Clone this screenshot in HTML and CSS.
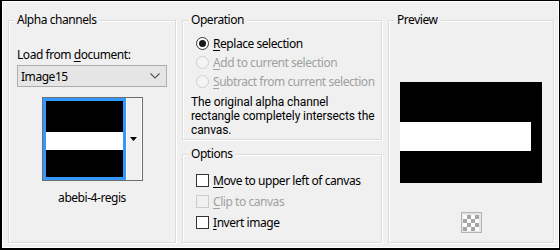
FILE: index.html
```html
<!DOCTYPE html>
<html>
<head>
<meta charset="utf-8">
<link rel="stylesheet" href="styles.css">
</head>
<body>
<div class="window">
  <fieldset class="group group-alpha">
    <legend>Alpha channels</legend>
    <div class="label">Load from <u>d</u>ocument:</div>
    <div class="select">
      <span>Image15</span>
      <svg class="chev" width="10" height="6" viewBox="0 0 10 6"><path d="M0.5 0.5 L5 5 L9.5 0.5" fill="none" stroke="#555" stroke-width="1.1"/></svg>
    </div>
    <div class="thumb">
      <div class="thumb-img"><div class="thumb-stripe"></div></div>
      <div class="thumb-btn"><svg width="7" height="4" viewBox="0 0 7 4"><path d="M0 0 H7 L3.5 4 Z" fill="#000"/></svg></div>
    </div>
    <div class="caption">abebi-4-regis</div>
  </fieldset>

  <div class="middle">
    <fieldset class="group group-op">
      <legend>Operation</legend>
      <div class="rows-radio">
        <div class="row"><span class="radio checked"></span><span><u>R</u>eplace selection</span></div>
        <div class="row disabled"><span class="radio"></span><span><u>A</u>dd to current selection</span></div>
        <div class="row disabled"><span class="radio"></span><span><u>S</u>ubtract from current selection</span></div>
      </div>
      <p class="note">The original alpha channel<br>rectangle completely intersects the<br>canvas.</p>
    </fieldset>
    <fieldset class="group group-opt">
      <legend>Options</legend>
      <div class="rows-check">
        <div class="row"><span class="check"></span><span><u>M</u>ove to upper left of canvas</span></div>
        <div class="row disabled"><span class="check"></span><span><u>C</u>lip to canvas</span></div>
        <div class="row"><span class="check"></span><span><u>I</u>nvert image</span></div>
      </div>
    </fieldset>
  </div>

  <fieldset class="group group-preview">
    <legend>Preview</legend>
    <div class="preview-img"><div class="preview-stripe"></div></div>
    <div class="checker-btn"><div class="checker"></div></div>
  </fieldset>
</div>
</body>
</html>
```

FILE: styles.css
```css
* { box-sizing: border-box; }
html, body { margin: 0; padding: 0; background: #fff; }
body {
  font-family: "Noto Sans", "Open Sans", sans-serif;
  font-size: 12px;
  letter-spacing: -0.45px;
  color: #000;
}
.window {
  width: 560px;
  height: 250px;
  background: #f0f0f0;
  border-top: 1px solid #000;
  border-left: 2px solid #000;
  border-right: 1px solid #000;
  border-bottom: 2px solid #000;
  box-shadow: inset 1px 1px 0 #fff, inset -1px -1px 0 #fff;
  padding: 11px 0 0 6px;
  display: grid;
  grid-template-columns: 168px 200px 166px;
  column-gap: 6px;
  align-items: start;
}
u { text-decoration: underline; text-underline-offset: 2px; }

.group {
  margin: 0;
  padding: 0;
  border: 1px solid #dcdcdc;
  box-shadow: 1px 1px 0 #fff, inset 1px 1px 0 #fff;
  min-width: 0;
}
.group legend {
  margin-left: 5px;
  padding: 0 3px;
  line-height: 16px;
  background: #f0f0f0;
}
.group-alpha { height: 231px; display: flex; flex-direction: column; align-items: center; }
.group-alpha .label { align-self: flex-start; margin: 19px 0 0 8px; line-height: 16px; }
.select {
  align-self: flex-start;
  margin: 2px 0 0 8px;
  width: 150px;
  height: 22px;
  background: #e5e5e5;
  border: 1px solid #adadad;
  display: flex;
  align-items: center;
  justify-content: space-between;
  padding: 0 6px 0 3px;
}
.thumb {
  margin-top: 10px;
  width: 101px;
  height: 84px;
  border: 1px solid #6e6e6e;
  display: flex;
  background: #f0f0f0;
}
.thumb-img {
  width: 83px;
  height: 82px;
  border: 3px solid #3399ff;
  background: #000;
  display: flex;
  flex-direction: column;
  justify-content: center;
}
.thumb-stripe { height: 18px; background: #fff; margin-top: 4px; }
.thumb-btn {
  flex: 1;
  display: flex;
  align-items: center;
  justify-content: center;
  border-left: 1px solid #fff;
  border-right: 1px solid #fff;
}
.caption { margin-top: 9px; line-height: 16px; }

.middle { display: flex; flex-direction: column; gap: 6px; }
.group-op { height: 128px; }
.group-opt { height: 97px; }
.rows-radio { margin-top: 6px; padding-left: 13px; }
.rows-radio .row { height: 19px; }
.row { display: flex; align-items: center; gap: 4px; white-space: nowrap; }
.row.disabled { color: #a0a0a0; }
.radio {
  width: 13px; height: 13px; border-radius: 50%;
  border: 1px solid #333; background: #fff;
  display: flex; align-items: center; justify-content: center;
  flex: none;
}
.radio.checked::after { content: ""; width: 7px; height: 7px; border-radius: 50%; background: #1a1a1a; }
.row.disabled .radio { border-color: #cfcfcf; background: #f4f4f4; }
.note {
  margin: 4px 0 0 8px;
  font-family: Roboto, "Noto Sans", sans-serif;
  font-size: 12px;
  letter-spacing: -0.1px;
  line-height: 14px;
  white-space: nowrap;
}
.rows-check { margin-top: 8px; padding-left: 13px; }
.rows-check .row { height: 21px; }
.check { width: 13px; height: 13px; border: 1px solid #333; background: #fff; flex: none; }
.row.disabled .check { border-color: #cccccc; background: #f0f0f0; }

.group-preview { height: 231px; display: flex; flex-direction: column; align-items: center; }
.preview-img {
  margin-top: 54px;
  width: 142px;
  height: 101px;
  background: #000;
  padding-top: 40px;
}
.preview-stripe { width: 131px; height: 29px; background: #fff; }
.checker-btn {
  margin-top: 29px;
  width: 21px; height: 21px;
  border: 1px solid #b4b4b4;
  background: #e6e6e6;
  display: flex; align-items: center; justify-content: center;
}
.checker {
  width: 16px; height: 16px;
  background-color: #fff;
  background-image:
    linear-gradient(45deg, #a6a6a6 25%, transparent 25%, transparent 75%, #a6a6a6 75%),
    linear-gradient(45deg, #a6a6a6 25%, transparent 25%, transparent 75%, #a6a6a6 75%);
  background-size: 8px 8px;
  background-position: 0 0, 4px 4px;
}
```
